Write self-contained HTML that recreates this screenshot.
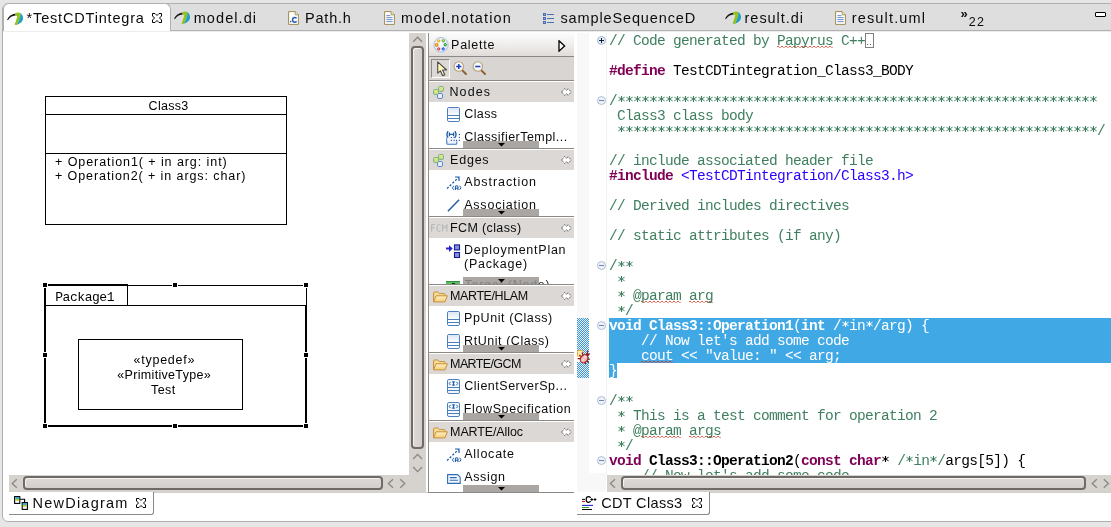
<!DOCTYPE html>
<html>
<head>
<meta charset="utf-8">
<title>Papyrus</title>
<style>
html,body{margin:0;padding:0;}
body{width:1111px;height:527px;overflow:hidden;background:#e6e6e6;position:relative;font-family:"Liberation Sans",sans-serif;color:#0c0c0c;}
.abs,.abs *{position:absolute;}
div,span,svg{position:absolute;box-sizing:border-box;}
.t{white-space:nowrap;line-height:1;}
.t14{font-size:14.5px;}
.t12{font-size:12.5px;}
/* frame */
#frame{left:2px;top:3px;width:1120px;height:519px;background:#fff;border:1px solid #b0b0b0;border-radius:6px 0 0 6px;}
#tabbar{left:3px;top:4px;width:1108px;height:26px;background:#dedede;}
#tabline{left:3px;top:30px;width:1108px;height:1px;background:#b2b2b2;}
#tabline2{left:3px;top:31px;width:1108px;height:1px;background:#ececec;}
#acttab{left:3px;top:3px;width:168px;height:29px;background:#fff;border:1px solid #b0b0b0;border-bottom:none;border-radius:6px 6px 0 0;}
/* scrollbars */
.trough{background:#d6d2ce;}
.thumb{background:linear-gradient(#dedad7,#d3cfcc);border:2px solid #6f6a67;border-radius:4px;box-shadow:inset 1px 1px 0 #f4f2f0;}
.thumbv{background:linear-gradient(90deg,#dedad7,#d3cfcc);border:2px solid #6f6a67;border-radius:4px;box-shadow:inset 1px 1px 0 #f4f2f0;}
/* diagram */
.ln{background:#000;}
#d1,#d2,#d3,#d4,#d5,#d6,#d7{color:#000;}
.hd{background:#000;width:4px;height:4px;box-shadow:0 0 0 1px #fff;}
/* palette */
#pal{left:429px;top:33px;width:145px;height:460px;background:#fff;overflow:hidden;}
.dh{left:0;width:145px;height:20px;background:#dcd8d6;}
.dline{left:0;width:145px;height:1px;background:#8c8886;}
.sd{left:34px;width:76px;height:6px;background:#aaa6a4;}
.pin{left:130px;}
/* code */
#code{left:577px;top:33px;width:534px;height:442px;background:#fff;overflow:hidden;}
.cl{left:32px;height:15px;white-space:pre;font-family:"Liberation Mono",monospace;font-size:14.5px;letter-spacing:-0.7px;line-height:17px;color:#000;}
.sel,.sel span{color:#fff !important;}
.cm{color:#3f7f5f;position:static;}
.kw{color:#7f0055;font-weight:bold;position:static;}
.b{font-weight:bold;position:static;}
.st{color:#2a00ff;position:static;}
.sq{position:static;background:repeating-linear-gradient(90deg,rgba(228,48,20,.8) 0 2px,transparent 2px 4px) 0 13px/100% 1px no-repeat,repeating-linear-gradient(90deg,transparent 0 2px,rgba(228,48,20,.5) 2px 4px) 0 14px/100% 1px no-repeat;}
</style>
</head>
<body>
<div id="root" style="left:0;top:0;width:1111px;height:527px;will-change:transform;">
<!--SYM-->
<svg width="0" height="0" style="left:0;top:0;">
<defs>
<linearGradient id="g-cls" x1="0" y1="0" x2="0" y2="1"><stop offset="0" stop-color="#dbe6f5"/><stop offset="1" stop-color="#fbfcfe"/></linearGradient>
<linearGradient id="g-yg" x1="0" y1="0" x2="0" y2="1"><stop offset="0" stop-color="#eeea78"/><stop offset="1" stop-color="#c4d690"/></linearGradient>
<linearGradient id="g-fold" x1="0" y1="0" x2="0" y2="1"><stop offset="0" stop-color="#fdf0c4"/><stop offset="1" stop-color="#f3cf7a"/></linearGradient>
<radialGradient id="g-pal" cx="0.5" cy="0.4" r="0.6"><stop offset="0" stop-color="#ffffff"/><stop offset="1" stop-color="#d5e3f5"/></radialGradient>
<symbol id="i-pal" viewBox="0 0 16 16">
<ellipse cx="8" cy="7.8" rx="7.2" ry="7.4" fill="url(#g-pal)" stroke="#a9bedc" stroke-width="0.9"/>
<circle cx="5.6" cy="3.9" r="1.2" fill="#ffe9a0" stroke="#eda800" stroke-width="1"/>
<circle cx="10.3" cy="3.8" r="1.2" fill="#d8f0a0" stroke="#58a818" stroke-width="1"/>
<circle cx="3.7" cy="7.9" r="1.3" fill="#ffd890" stroke="#f08a00" stroke-width="1.1"/>
<circle cx="12.2" cy="7.7" r="1.2" fill="#a0e0a0" stroke="#149414" stroke-width="1"/>
<circle cx="5.7" cy="11.9" r="1.1" fill="#ffc0c0" stroke="#d82828" stroke-width="1"/>
<circle cx="10.2" cy="11.9" r="1.1" fill="#b0c8ff" stroke="#1848d8" stroke-width="1"/>
</symbol>
<symbol id="i-cursor" viewBox="0 0 11 16">
<path d="M0.7 0.8 L0.7 12.2 L3.4 9.8 L5.6 14.8 L7.8 13.8 L5.6 9 L9.6 9 Z" fill="#fbf7b8" stroke="#4a4a4a" stroke-width="1.1" stroke-linejoin="round"/>
</symbol>
<symbol id="i-zoomin" viewBox="0 0 14 14">
<path d="M8.8 8.8 L13 13" stroke="#8a5a2a" stroke-width="1.8" stroke-linecap="round"/>
<circle cx="5.8" cy="5.5" r="4.7" fill="#f4f8fd" stroke="#b8a070" stroke-width="1.1"/>
<path d="M3.2 5.5H8.4M5.8 2.9V8.1" stroke="#1a3fc0" stroke-width="1.5"/>
</symbol>
<symbol id="i-zoomout" viewBox="0 0 14 14">
<path d="M8.8 8.8 L13 13" stroke="#8a5a2a" stroke-width="1.8" stroke-linecap="round"/>
<circle cx="5.8" cy="5.5" r="4.7" fill="#f4f8fd" stroke="#b8a070" stroke-width="1.1"/>
<path d="M3.2 5.5H8.4" stroke="#1a3fc0" stroke-width="1.5"/>
</symbol>
<symbol id="i-nodes" viewBox="0 0 11 13">
<rect x="5.5" y="0.5" width="5" height="5" rx="1.3" fill="url(#g-yg)" stroke="#74b68c" stroke-width="1"/>
<rect x="4.5" y="7.5" width="5" height="5" rx="1.3" fill="#e8f1f8" stroke="#5b82c8" stroke-width="1"/>
<rect x="0.5" y="3.5" width="5" height="5" rx="1.3" fill="url(#g-yg)" stroke="#74b68c" stroke-width="1"/>
</symbol>
<symbol id="i-folder" viewBox="0 0 17 13">
<path d="M1 11.5 V2.2 Q1 1 2.2 1 H5.6 L7.2 2.8 H12.4 Q13.4 2.8 13.4 3.8 V5" fill="#f7dc98" stroke="#c48a2c" stroke-width="1"/>
<path d="M1 11.8 L3.6 5.2 H16 L13.2 11.8 Z" fill="url(#g-fold)" stroke="#c48a2c" stroke-width="1" stroke-linejoin="round"/>
</symbol>
<symbol id="i-pin" viewBox="0 0 11 8">
<path d="M0.6 4 L3.6 0.6 L5.4 2.6 L7.2 0.6 L10.2 4 L7.2 7.4 L5.4 5.4 L3.6 7.4 Z" fill="#fff" stroke="#3c3836" stroke-width="1" stroke-dasharray="1 1"/>
</symbol>
<symbol id="i-class" viewBox="0 0 13 15">
<rect x="0.5" y="0.5" width="12" height="14" rx="1.4" fill="#fff" stroke="#4a80bf" stroke-width="1"/>
<rect x="1" y="1" width="11" height="7" fill="url(#g-cls)"/>
<path d="M0.5 8.5H12.5M0.5 11.5H12.5" stroke="#4a80bf" stroke-width="1"/>
</symbol>
<symbol id="i-iface" viewBox="0 0 13 15">
<rect x="0.5" y="0.5" width="12" height="14" rx="1.4" fill="#f4f8fd" stroke="#4a80bf" stroke-width="1"/>
<path d="M0.5 8.5H12.5M0.5 11.5H12.5" stroke="#4a80bf" stroke-width="1"/>
<path d="M3.6 2.8 L2.2 4.5 L3.6 6.2 M9.4 2.8 L10.8 4.5 L9.4 6.2" fill="none" stroke="#1f5ea8" stroke-width="1"/>
<path d="M5.2 2.9H7.8M5.2 6.1H7.8M6.5 2.9V6.1" stroke="#1f5ea8" stroke-width="1.2"/>
</symbol>
<symbol id="i-ctempl" viewBox="0 0 15 14">
<path d="M0.8 6.6 V12.4 Q0.8 13.3 1.7 13.3 H9.9 Q10.8 13.3 10.8 12.4 V10.4" fill="#eef4fb" stroke="#3d7abf" stroke-width="1.1"/>
<rect x="1.4" y="6.4" width="8.8" height="3.4" fill="#f4f8fd"/>
<path d="M2 0.2 Q0 3.4 2 6.6 M9 0.2 Q11 3.4 9 6.6" fill="none" stroke="#1c5fa8" stroke-width="1.4"/>
<path d="M3.4 1.6V5.2M7.6 1.6V5.2M3.4 3.4H7.6" stroke="#1c5fa8" stroke-width="1.3"/>
<g fill="#1f3a96"><rect x="12.8" y="3" width="1.1" height="1.1"/><rect x="12.8" y="5.9" width="1.1" height="1.1"/><rect x="12.8" y="8.8" width="1.1" height="1.1"/><rect x="10" y="8.8" width="1.1" height="1.1"/><rect x="7.6" y="8.8" width="1.1" height="1.1"/><rect x="4.8" y="8.8" width="1.1" height="1.1"/><rect x="4.8" y="6" width="1.1" height="1"/><rect x="7.6" y="6" width="1.1" height="1"/></g>
</symbol>
<symbol id="i-abst" viewBox="0 0 16 15">
<path d="M1 12.6 L12.6 1.4" stroke="#1f5ea8" stroke-width="1.3" stroke-dasharray="2.2 1.6"/>
<path d="M9 1 H13 V5" fill="none" stroke="#1f5ea8" stroke-width="1.2"/>
<path d="M7.8 9.8 L6.4 11.8 L7.8 13.8 M13.6 9.8 L15 11.8 L13.6 13.8" fill="none" stroke="#1f5ea8" stroke-width="1"/>
<path d="M9.4 14 V11 Q9.4 9.8 10.7 9.8 Q12 9.8 12 11 V14 M9.4 12.2 H12" fill="none" stroke="#1f5ea8" stroke-width="1.1"/>
</symbol>
<symbol id="i-deploy" viewBox="0 0 16 15">
<path d="M0 3.6 H3 V1.2 L6.8 4.6 L3 8 V5.6 H0 Z" fill="#2424d0"/>
<rect x="8.5" y="0.9" width="5" height="5" fill="#7f8fe0" stroke="#1a1a90" stroke-width="1.1"/>
<rect x="8.5" y="8.5" width="5" height="5" fill="#7f8fe0" stroke="#1a1a90" stroke-width="1.1"/>
</symbol>
<symbol id="i-note" viewBox="0 0 14 10">
<path d="M0.6 0.6 H10.6 L13.2 3.2 V9.4 H0.6 Z" fill="#f2f7fd" stroke="#2f6cb8" stroke-width="1.1" stroke-linejoin="round"/>
<path d="M2.8 3.6 H9.6 M2.8 6.2 H11" stroke="#2f6cb8" stroke-width="1.1"/>
</symbol>
<symbol id="i-papy" viewBox="0 0 17 14">
<path d="M0.1 7.7 Q2.4 2.2 8.6 1.5 L8.6 3.6 Q3.8 3.9 0.9 8.2 Z" fill="#17171c"/>
<path d="M8.2 1.4 Q10 0 13.4 0.9 Q13.6 4.6 12 8 Q11 10.6 10.2 12.7 Q8.6 13.4 7.6 12.6 Q9.4 8 10.3 4.2 Q9 3.6 8.2 3.4 Z" fill="#94c11c"/>
<path d="M13.4 0.9 Q16.4 3.4 16 7 Q15.4 10.6 10.2 12.7 Q11 10.6 12 8 Q13.6 4.6 13.4 0.9 Z" fill="#1f9fc4"/>
</symbol>
<symbol id="i-close" viewBox="0 0 10 10">
<path d="M0.5 0.5 H3 L5 2.5 L7 0.5 H9.5 V3 L7.5 5 L9.5 7 V9.5 H7 L5 7.5 L3 9.5 H0.5 V7 L2.5 5 L0.5 3 Z" fill="#fff" stroke="#000" stroke-width="1" stroke-linejoin="miter"/>
</symbol>
<symbol id="i-doc" viewBox="0 0 11 14">
<path d="M0.6 0.6 H7.2 L10.4 3.8 V13.4 H0.6 Z" fill="#fdfdfd" stroke="#a08a50" stroke-width="1"/>
<path d="M7.2 0.6 V3.8 H10.4" fill="#f4ecd0" stroke="#a08a50" stroke-width="0.9"/>
<path d="M2.4 4.6H6.4M2.4 6.6H8.6M2.4 8.6H8.6M2.4 10.6H8.6" stroke="#5a82c8" stroke-width="0.9"/>
</symbol>
<symbol id="i-cfile" viewBox="0 0 11 14">
<path d="M0.6 0.6 H7.2 L10.4 3.8 V13.4 H0.6 Z" fill="#fdfdfd" stroke="#a08a50" stroke-width="1"/>
<path d="M7.2 0.6 V3.8 H10.4" fill="#f4ecd0" stroke="#a08a50" stroke-width="0.9"/>
<rect x="2" y="9.8" width="1.4" height="1.5" fill="#2a5fb0"/>
<path d="M8.6 7.4 Q7.8 6.4 6.6 6.4 Q4.6 6.4 4.6 8.8 Q4.6 11.2 6.6 11.2 Q7.8 11.2 8.6 10.2" fill="none" stroke="#2a5fb0" stroke-width="1.5"/>
</symbol>
<symbol id="i-list" viewBox="0 0 12 12">
<g fill="#4a6fb2"><rect x="0" y="0" width="3" height="3"/><rect x="0" y="4" width="3" height="3"/><rect x="0" y="8" width="3" height="3"/>
<rect x="4" y="1" width="7" height="1"/><rect x="4" y="5" width="7" height="1"/><rect x="4" y="9" width="7" height="1"/></g>
<g fill="#9db3de"><rect x="1" y="1" width="1" height="1"/><rect x="1" y="5" width="1" height="1"/><rect x="1" y="9" width="1" height="1"/></g>
</symbol>
<symbol id="i-diag" viewBox="0 0 15 14">
<rect x="0.6" y="0.6" width="5.2" height="6.8" fill="#fff" stroke="#000" stroke-width="1.1"/>
<rect x="1.2" y="1.2" width="4" height="1.6" fill="#1a9ac8"/>
<rect x="1.2" y="3" width="4" height="1.6" fill="#a8c81a"/>
<path d="M5.8 3.2 H10.6 V6.4" fill="none" stroke="#000" stroke-width="1.1"/>
<rect x="8.2" y="6.6" width="5.2" height="6.8" fill="#fff" stroke="#000" stroke-width="1.1"/>
<rect x="8.8" y="7.2" width="4" height="1.6" fill="#1a9ac8"/>
<rect x="8.8" y="9" width="4" height="1.6" fill="#a8c81a"/>
</symbol>
<symbol id="i-cdt" viewBox="0 0 15 14">
<path d="M0 3.4H3M0 13.5H10" stroke="#000" stroke-width="1"/>
<path d="M0 5.5H3" stroke="#e01010" stroke-width="1.1"/>
<path d="M0 9.4H11" stroke="#2222e0" stroke-width="1.1"/>
<path d="M0 11.5H7" stroke="#30a030" stroke-width="1.1"/>
<path d="M8.6 1.9 Q7.8 0.7 6.5 0.7 Q4.2 0.7 4.2 3.5 Q4.2 6.3 6.5 6.3 Q7.8 6.3 8.6 5.1" fill="none" stroke="#000" stroke-width="1.2"/>
<path d="M8.4 3.5H11.2M9.8 2.1V4.9M11.6 3.5H14.4M13 2.1V4.9" stroke="#000" stroke-width="1"/>
</symbol>
<symbol id="i-fplus" viewBox="0 0 9 9">
<circle cx="4.5" cy="4.5" r="4" fill="#e6ecf4" stroke="#a3b6d2" stroke-width="1"/>
<path d="M2 4.5H7M4.5 2V7" stroke="#0c1c3a" stroke-width="1"/>
</symbol>
<symbol id="i-fminus" viewBox="0 0 9 9">
<circle cx="4.5" cy="4.5" r="4" fill="#eef2f8" stroke="#aebfd8" stroke-width="1"/>
<path d="M2 4.5H7" stroke="#6f88b4" stroke-width="1"/>
</symbol>
<symbol id="i-fcm" viewBox="0 0 17 8">
<path d="M0.6 7.6V0.6H4M0.6 3.8H3.2" fill="none" stroke="#b4b4b4" stroke-width="1"/>
<path d="M9.6 1.4Q8.8 0.5 7.8 0.5Q6 0.5 6 4Q6 7.5 7.8 7.5Q8.8 7.5 9.6 6.6" fill="none" stroke="#b4b4b4" stroke-width="1"/>
<path d="M11.6 7.6V0.6L13.8 4.4L16 0.6V7.6" fill="none" stroke="#b4b4b4" stroke-width="1"/>
</symbol>
<symbol id="i-bug" viewBox="0 0 13 15">
<rect x="0" y="6.4" width="4.4" height="6.6" fill="#fff"/>
<rect x="0.5" y="1.5" width="5.2" height="6" rx="0.8" fill="#fcecb0" stroke="#f0a630" stroke-width="1"/>
<g transform="rotate(38 7.4 9.4)">
<path d="M4.3 7.6 L1.8 6.2 M4 9.8 L1.2 9.8 M4.4 12 L2.2 13.8 M10.5 7.6 L13 6.2 M10.8 9.8 L13.6 9.8 M10.4 12 L12.6 13.8 M6.6 4 L5.4 1 M8.2 4 L9.4 1" stroke="#8e1616" stroke-width="1.1" fill="none"/>
<circle cx="7.4" cy="5" r="1.7" fill="#8e1616"/>
<ellipse cx="7.4" cy="9.9" rx="3.5" ry="4.3" fill="#ecb8b8" stroke="#a01c1c" stroke-width="1.1"/>
<path d="M7.4 6 V13.8" stroke="#fff" stroke-width="0.9" stroke-dasharray="1.2 0.8"/>
<path d="M5.6 8 Q6 7 7 6.8" stroke="#fff" stroke-width="0.9" fill="none" opacity=".9"/>
</g>
</symbol>
<pattern id="star-g" width="8" height="15" patternUnits="userSpaceOnUse"><path d="M4.5 3V9" stroke="#3f7f5f" stroke-width="1.15"/><path d="M1.4 4.2L7.6 7.8M7.6 4.2L1.4 7.8" stroke="#3f7f5f" stroke-width="0.95"/></pattern>
<pattern id="star-w" width="8" height="15" patternUnits="userSpaceOnUse"><path d="M4.5 3V9" stroke="#ffffff" stroke-width="1.15"/><path d="M1.4 4.2L7.6 7.8M7.6 4.2L1.4 7.8" stroke="#ffffff" stroke-width="0.95"/></pattern>
<pattern id="star-k" width="8" height="15" patternUnits="userSpaceOnUse"><path d="M4.5 3V9" stroke="#000000" stroke-width="1.15"/><path d="M1.4 4.2L7.6 7.8M7.6 4.2L1.4 7.8" stroke="#000000" stroke-width="0.95"/></pattern>
<pattern id="hatch" width="2" height="2" patternUnits="userSpaceOnUse"><rect width="2" height="2" fill="#f3ebe6"/><rect width="1" height="1" fill="#339ae6"/><rect x="1" y="1" width="1" height="1" fill="#339ae6"/></pattern>
</defs>
</svg>
<!--/SYM-->
<div id="frame"></div>
<div id="tabbar"></div>
<div id="tabline"></div>
<div id="acttab"></div>
<div id="tabline2"></div>

<!-- TABS -->
<div id="tabs" style="left:0;top:0;width:1111px;height:32px;">

<svg style="left:7px;top:11.5px;" width="17" height="14" viewBox="0 0 17 14"><use href="#i-papy"/></svg>
<svg style="left:152px;top:13px;" width="10" height="10" viewBox="0 0 10 10"><use href="#i-close"/></svg>
<svg style="left:174px;top:11.2px;" width="17" height="14" viewBox="0 0 17 14"><use href="#i-papy"/></svg>
<svg style="left:288px;top:11px;" width="11" height="14" viewBox="0 0 11 14"><use href="#i-cfile"/></svg>
<svg style="left:384px;top:11px;" width="11" height="14" viewBox="0 0 11 14"><use href="#i-doc"/></svg>
<svg style="left:543px;top:13px;" width="12" height="12" viewBox="0 0 12 12"><use href="#i-list"/></svg>
<svg style="left:725px;top:11.2px;" width="17" height="14" viewBox="0 0 17 14"><use href="#i-papy"/></svg>
<svg style="left:835px;top:11px;" width="11" height="14" viewBox="0 0 11 14"><use href="#i-doc"/></svg>
<span class="t t14" id="tb1" style="left:26.6px;letter-spacing:0.82px;top:11px;">*TestCDTintegra</span>
<span class="t t14" id="tb2" style="left:193.7px;letter-spacing:1.08px;top:11px;">model.di</span>
<span class="t t14" id="tb3" style="left:305.1px;letter-spacing:0.77px;top:11px;">Path.h</span>
<span class="t t14" id="tb4" style="left:401px;letter-spacing:1.13px;top:11px;">model.notation</span>
<span class="t t14" id="tb5" style="left:560.5px;letter-spacing:0.87px;top:11px;">sampleSequenceD</span>
<span class="t t14" id="tb6" style="left:744.6px;letter-spacing:0.95px;top:11px;">result.di</span>
<span class="t t14" id="tb7" style="left:851.7px;letter-spacing:1.17px;top:11px;">result.uml</span>
<span class="t" id="tb8" style="left:960.5px;top:7px;font-size:13px;font-weight:bold;">»</span>
<span class="t t12" id="tb9" style="left:968.8px;letter-spacing:1.15px;top:16px;font-size:12.5px;">22</span>
<div style="left:1095px;top:12px;width:11px;height:5px;border:1px solid #000;background:#fff;border-radius:1px;"></div>
</div>

<!-- LEFT DIAGRAM -->
<div id="diag" style="left:3px;top:32px;width:407px;height:443px;background:#fff;overflow:hidden;"></div>
<!-- Class3 -->
<div style="left:45px;top:96px;width:242px;height:129px;border:1px solid #000;"></div>
<div class="ln" style="left:45px;top:114px;width:242px;height:1px;"></div>
<div class="ln" style="left:45px;top:153px;width:242px;height:1px;"></div>
<span class="t t12" id="d1" style="left:148.6px;letter-spacing:0.29px;top:100px;">Class3</span>
<span class="t t12" id="d2" style="left:55.0px;letter-spacing:0.93px;top:156px;">+ Operation1( + in arg: int)</span>
<span class="t t12" id="d3" style="left:55.0px;letter-spacing:0.91px;top:170px;">+ Operation2( + in args: char)</span>
<!-- Package1 -->
<div class="ln" style="left:45px;top:284px;width:83px;height:2px;"></div>
<div class="ln" style="left:127px;top:285px;width:180px;height:1px;"></div>
<div class="ln" style="left:44px;top:285px;width:2px;height:142px;"></div>
<div class="ln" style="left:127px;top:285px;width:1px;height:21px;"></div>
<div class="ln" style="left:45px;top:305px;width:262px;height:1px;"></div>
<div class="ln" style="left:306px;top:285px;width:1px;height:21px;"></div>
<div class="ln" style="left:305px;top:305px;width:2px;height:122px;"></div>
<div class="ln" style="left:45px;top:425px;width:262px;height:2px;"></div>
<div class="hd" style="left:43px;top:283px;"></div>
<div class="hd" style="left:173px;top:283px;"></div>
<div class="hd" style="left:304px;top:283px;"></div>
<div class="hd" style="left:43px;top:353px;"></div>
<div class="hd" style="left:304px;top:353px;"></div>
<div class="hd" style="left:43px;top:424px;"></div>
<div class="hd" style="left:173px;top:424px;"></div>
<div class="hd" style="left:304px;top:424px;"></div>
<span class="t" id="d4" style="left:55.2px;letter-spacing:-0.44px;top:291px;font-family:'Liberation Mono',monospace;font-size:13px;">Package1</span>
<div style="left:78px;top:339px;width:165px;height:71px;border:1px solid #000;"></div>
<span class="t t12" id="d5" style="left:133.6px;letter-spacing:0.74px;top:354px;">«typedef»</span>
<span class="t t12" id="d6" style="left:117.3px;letter-spacing:0.32px;top:369px;">«PrimitiveType»</span>
<span class="t t12" id="d7" style="left:150.9px;letter-spacing:0.51px;top:384px;">Test</span>

<!-- left scrollbars -->
<div class="trough" style="left:9px;top:475px;width:417px;height:17px;"></div>
<div class="thumb" style="left:23px;top:476px;width:360px;height:14px;"></div>
<div class="trough" style="left:409px;top:33px;width:17px;height:443px;"></div>
<div class="thumbv" style="left:411px;top:46px;width:13px;height:403px;"></div>
<div style="left:428px;top:33px;width:1px;height:460px;background:#908c8a;"></div>


<!-- PALETTE -->
<div id="pal">
<!--PAL-->
<div style="left:0;top:0;width:145px;height:23px;background:linear-gradient(#fcfcfc,#f3f1f0 40%,#e0dcda);"></div>
<div class="dline" style="top:23px;"></div>
<div style="left:0;top:24px;width:145px;height:23px;background:#d9d5d3;"></div>
<div class="dline" style="top:47px;"></div>
<svg style="left:4px;top:3.5px;" width="16" height="16" viewBox="0 0 16 16"><use href="#i-pal"/></svg>
<span class="t t12" id="p0" style="left:22.1px;letter-spacing:0.72px;top:6px;">Palette</span>
<svg style="left:129.3px;top:6.5px;" width="8" height="12" viewBox="0 0 8 12"><path d="M1 0.8 L6.6 6 L1 11.2 Z" fill="#fff" stroke="#000" stroke-width="1.3"/></svg>
<div style="left:2px;top:26px;width:19px;height:19px;border:1px solid;border-color:#8e8a88 #fff #fff #8e8a88;background:#dcd8d6;"></div>
<svg style="left:7.6px;top:28.2px;" width="11" height="16" viewBox="0 0 11 16"><use href="#i-cursor"/></svg>
<svg style="left:24px;top:28px;" width="14" height="14" viewBox="0 0 14 14"><use href="#i-zoomin"/></svg>
<svg style="left:42.8px;top:28px;" width="14" height="14" viewBox="0 0 14 14"><use href="#i-zoomout"/></svg>
<div class="dh" style="top:49px;"></div>
<svg style="left:4px;top:53px;" width="11" height="13" viewBox="0 0 11 13"><use href="#i-nodes"/></svg>
<span class="t t12" id="p1" style="left:20.5px;letter-spacing:1.09px;top:53px;">Nodes</span>
<svg style="left:131.6px;top:55.4px;" width="11" height="8" viewBox="0 0 11 8"><use href="#i-pin"/></svg>
<span class="t t12" id="p2" style="left:35.3px;letter-spacing:0.36px;top:74.6px;">Class</span>
<svg style="left:18px;top:74px;" width="13" height="15" viewBox="0 0 13 15"><use href="#i-class"/></svg>
<span class="t t12" id="p3" style="left:35.3px;letter-spacing:0.45px;top:97.6px;">ClassifierTempl...</span>
<svg style="left:17px;top:98px;" width="15" height="14" viewBox="0 0 15 14"><use href="#i-ctempl"/></svg>
<div class="sd" style="top:108px;height:7px;"></div>
<svg style="left:68.6px;top:110.4px;" width="7" height="3.6" viewBox="0 0 7 3.6"><path d="M0 0H7L3.5 3.6Z" fill="#000"/></svg>
<div class="dline" style="top:115px;"></div>
<div class="dh" style="top:117px;"></div>
<svg style="left:4px;top:121px;" width="11" height="13" viewBox="0 0 11 13"><use href="#i-nodes"/></svg>
<span class="t t12" id="p4" style="left:21.1px;letter-spacing:0.77px;top:121px;">Edges</span>
<svg style="left:131.6px;top:123.4px;" width="11" height="8" viewBox="0 0 11 8"><use href="#i-pin"/></svg>
<span class="t t12" id="p5" style="left:35.2px;letter-spacing:0.93px;top:142.6px;">Abstraction</span>
<svg style="left:17px;top:142.6px;" width="16" height="15" viewBox="0 0 16 15"><use href="#i-abst"/></svg>
<span class="t t12" id="p6" style="left:35.2px;letter-spacing:0.79px;top:165.6px;">Association</span>
<svg style="left:18px;top:166px;" width="13" height="13" viewBox="0 0 13 13"><path d="M0.9 12.2 L12.1 0.8" stroke="#1a5a9e" stroke-width="1.4"/></svg>
<div class="sd" style="top:176px;height:7px;"></div>
<svg style="left:68.6px;top:178.4px;" width="7" height="3.6" viewBox="0 0 7 3.6"><path d="M0 0H7L3.5 3.6Z" fill="#000"/></svg>
<div class="dline" style="top:183px;"></div>
<div class="dh" style="top:185px;"></div>
<svg style="left:2px;top:191px;" width="17" height="8" viewBox="0 0 17 8"><use href="#i-fcm"/></svg>
<span class="t t12" id="p7" style="left:21.1px;letter-spacing:0.36px;top:189px;">FCM (class)</span>
<svg style="left:131.6px;top:191.4px;" width="11" height="8" viewBox="0 0 11 8"><use href="#i-pin"/></svg>
<span class="t t12" id="p8" style="left:35.1px;letter-spacing:0.75px;top:210.6px;">DeploymentPlan</span>
<svg style="left:16.6px;top:211px;" width="16" height="15" viewBox="0 0 16 15"><use href="#i-deploy"/></svg>
<span class="t t12" id="p9" style="left:35.0px;letter-spacing:0.77px;top:224.6px;">(Package)</span>
<span class="t t12" id="p10" style="left:35.6px;letter-spacing:0.72px;top:245.6px;height:5.4px;overflow:hidden;color:#333;">Target (Node)</span>
<div style="left:17px;top:248px;width:14px;height:3px;background:#58c060;border-top:1px solid #2f8f3a;"></div>
<div style="left:23px;top:249.6px;width:3px;height:2px;background:#222;"></div>
<div class="sd" style="top:244px;height:7px;background:rgba(150,146,144,.82);"></div>
<svg style="left:68.6px;top:246.4px;" width="7" height="3.6" viewBox="0 0 7 3.6"><path d="M0 0H7L3.5 3.6Z" fill="#000"/></svg>
<div class="dline" style="top:251px;"></div>
<div class="dh" style="top:253px;"></div>
<svg style="left:2.6px;top:257.6px;" width="17" height="12" viewBox="0 0 17 12"><use href="#i-folder"/></svg>
<span class="t t12" id="p11" style="left:21.1px;letter-spacing:-0.42px;top:257px;">MARTE/HLAM</span>
<svg style="left:131.6px;top:259.4px;" width="11" height="8" viewBox="0 0 11 8"><use href="#i-pin"/></svg>
<span class="t t12" id="p12" style="left:35.1px;letter-spacing:0.58px;top:278.6px;">PpUnit (Class)</span>
<svg style="left:18px;top:278px;" width="13" height="15" viewBox="0 0 13 15"><use href="#i-class"/></svg>
<span class="t t12" id="p13" style="left:35.1px;letter-spacing:0.55px;top:301.6px;">RtUnit (Class)</span>
<svg style="left:18px;top:301px;" width="13" height="15" viewBox="0 0 13 15"><use href="#i-class"/></svg>
<div class="sd" style="top:312px;height:7px;"></div>
<svg style="left:68.6px;top:314.4px;" width="7" height="3.6" viewBox="0 0 7 3.6"><path d="M0 0H7L3.5 3.6Z" fill="#000"/></svg>
<div class="dline" style="top:319px;"></div>
<div class="dh" style="top:321px;"></div>
<svg style="left:2.6px;top:325.6px;" width="17" height="12" viewBox="0 0 17 12"><use href="#i-folder"/></svg>
<span class="t t12" id="p14" style="left:21.1px;letter-spacing:-0.62px;top:325px;">MARTE/GCM</span>
<svg style="left:131.6px;top:327.4px;" width="11" height="8" viewBox="0 0 11 8"><use href="#i-pin"/></svg>
<span class="t t12" id="p15" style="left:35.3px;letter-spacing:0.51px;top:346.6px;">ClientServerSp...</span>
<svg style="left:18px;top:346px;" width="13" height="15" viewBox="0 0 13 15"><use href="#i-iface"/></svg>
<span class="t t12" id="p16" style="left:34.8px;letter-spacing:0.61px;top:369.6px;">FlowSpecification</span>
<svg style="left:18px;top:369px;" width="13" height="15" viewBox="0 0 13 15"><use href="#i-iface"/></svg>
<div class="sd" style="top:380px;height:7px;"></div>
<svg style="left:68.6px;top:382.4px;" width="7" height="3.6" viewBox="0 0 7 3.6"><path d="M0 0H7L3.5 3.6Z" fill="#000"/></svg>
<div class="dline" style="top:387px;"></div>
<div class="dh" style="top:389px;"></div>
<svg style="left:2.6px;top:393.6px;" width="17" height="12" viewBox="0 0 17 12"><use href="#i-folder"/></svg>
<span class="t t12" id="p17" style="left:21.1px;letter-spacing:-0.12px;top:393px;">MARTE/Alloc</span>
<svg style="left:131.6px;top:395.4px;" width="11" height="8" viewBox="0 0 11 8"><use href="#i-pin"/></svg>
<span class="t t12" id="p18" style="left:35.2px;letter-spacing:0.77px;top:414.6px;">Allocate</span>
<svg style="left:17px;top:414.6px;" width="16" height="15" viewBox="0 0 16 15"><use href="#i-abst"/></svg>
<span class="t t12" id="p19" style="left:35.2px;letter-spacing:0.67px;top:437.6px;">Assign</span>
<svg style="left:18px;top:440.6px;" width="14" height="10" viewBox="0 0 14 10"><use href="#i-note"/></svg>
<div class="sd" style="top:452px;height:6.6px;"></div>
<svg style="left:68.6px;top:454.4px;" width="7" height="3.6" viewBox="0 0 7 3.6"><path d="M0 0H7L3.5 3.6Z" fill="#000"/></svg>
<div class="dline" style="top:459px;"></div>
<!--/PAL-->
</div>

<!-- CODE -->
<div id="code">
<!--CODE-->
<div style="left:0;top:0;width:29px;height:442px;background:#f8f8f8;"></div>
<div style="left:12px;top:0;width:17px;height:440px;background:#fff;"></div>
<div style="left:29px;top:0;width:1px;height:442px;background:#f1f1f1;"></div>
<div style="left:30px;top:0;width:1px;height:442px;background:#fff;"></div>
<svg style="left:0;top:285px;" width="12" height="60"><rect width="12" height="60" fill="url(#hatch)"/></svg>
<div style="left:32px;top:285px;width:502px;height:45px;background:#41a8e6;"></div>
<div style="left:32px;top:330px;width:8px;height:15px;background:#41a8e6;"></div>
<div class="cl" style="top:0px;"><span class="cm">// Code generated by </span><span class="cm"><span class="sq">Papyrus</span></span><span class="cm"> C++</span></div>
<div class="cl" style="top:30px;"><span class="kw">#define</span> TestCDTintegration_Class3_BODY</div>
<div class="cl" style="top:60px;"><span class="cm">/                                                            </span></div>
<div class="cl" style="top:75px;"><span class="cm"> Class3 class body</span></div>
<div class="cl" style="top:90px;"><span class="cm">                                                             /</span></div>
<div class="cl" style="top:120px;"><span class="cm">// include associated header file</span></div>
<div class="cl" style="top:135px;"><span class="kw">#include</span> <span class="st">&lt;TestCDTintegration/Class3.h&gt;</span></div>
<div class="cl" style="top:165px;"><span class="cm">// Derived includes directives</span></div>
<div class="cl" style="top:195px;"><span class="cm">// static attributes (if any)</span></div>
<div class="cl" style="top:225px;"><span class="cm">/  </span></div>
<div class="cl" style="top:240px;"><span class="cm">  </span></div>
<div class="cl" style="top:255px;"><span class="cm">   @</span><span class="cm"><span class="sq">param</span></span><span class="cm"> </span><span class="cm"><span class="sq">arg</span></span></div>
<div class="cl" style="top:270px;"><span class="cm">  /</span></div>
<div class="cl sel" style="top:285px;"><span class="b">void</span> <span class="b">Class3::Operation1</span>(<span class="b">int</span> / in /arg) {</div>
<div class="cl sel" style="top:300px;">    // Now let&#x27;s add some code</div>
<div class="cl sel" style="top:315px;">    <span class="sq">cout</span> &lt;&lt; &quot;value: &quot; &lt;&lt; arg;</div>
<div class="cl sel" style="top:330px;">}</div>
<div class="cl" style="top:360px;"><span class="cm">/  </span></div>
<div class="cl" style="top:375px;"><span class="cm">   This is a test comment for operation 2</span></div>
<div class="cl" style="top:390px;"><span class="cm">   @</span><span class="cm"><span class="sq">param</span></span><span class="cm"> </span><span class="cm"><span class="sq">args</span></span></div>
<div class="cl" style="top:405px;"><span class="cm">  /</span></div>
<div class="cl" style="top:420px;"><span class="kw">void</span> <span class="b">Class3::Operation2</span>(<span class="kw">const</span> <span class="kw">char</span>  <span class="cm">/ in /</span>args[5]) {</div>
<div class="cl" style="top:435px;"><span class="cm">    // Now let&#x27;s add some code</span></div>
<svg style="left:40px;top:60px;" width="480" height="15"><rect width="480" height="15" fill="url(#star-g)"/></svg>
<svg style="left:40px;top:90px;" width="480" height="15"><rect width="480" height="15" fill="url(#star-g)"/></svg>
<svg style="left:40px;top:225px;" width="16" height="15"><rect width="16" height="15" fill="url(#star-g)"/></svg>
<svg style="left:40px;top:240px;" width="8" height="15"><rect width="8" height="15" fill="url(#star-g)"/></svg>
<svg style="left:40px;top:255px;" width="8" height="15"><rect width="8" height="15" fill="url(#star-g)"/></svg>
<svg style="left:40px;top:270px;" width="8" height="15"><rect width="8" height="15" fill="url(#star-g)"/></svg>
<svg style="left:264px;top:285px;" width="8" height="15"><rect width="8" height="15" fill="url(#star-w)"/></svg>
<svg style="left:288px;top:285px;" width="8" height="15"><rect width="8" height="15" fill="url(#star-w)"/></svg>
<svg style="left:40px;top:360px;" width="16" height="15"><rect width="16" height="15" fill="url(#star-g)"/></svg>
<svg style="left:40px;top:375px;" width="8" height="15"><rect width="8" height="15" fill="url(#star-g)"/></svg>
<svg style="left:40px;top:390px;" width="8" height="15"><rect width="8" height="15" fill="url(#star-g)"/></svg>
<svg style="left:40px;top:405px;" width="8" height="15"><rect width="8" height="15" fill="url(#star-g)"/></svg>
<svg style="left:304px;top:420px;" width="8" height="15"><rect width="8" height="15" fill="url(#star-k)"/></svg>
<svg style="left:328px;top:420px;" width="8" height="15"><rect width="8" height="15" fill="url(#star-g)"/></svg>
<svg style="left:352px;top:420px;" width="8" height="15"><rect width="8" height="15" fill="url(#star-g)"/></svg>
<svg style="left:20px;top:3px;" width="9" height="9" viewBox="0 0 9 9"><use href="#i-fplus"/></svg>
<svg style="left:20px;top:63px;" width="9" height="9" viewBox="0 0 9 9"><use href="#i-fminus"/></svg>
<svg style="left:20px;top:228px;" width="9" height="9" viewBox="0 0 9 9"><use href="#i-fminus"/></svg>
<svg style="left:20px;top:288px;" width="9" height="9" viewBox="0 0 9 9"><use href="#i-fminus"/></svg>
<svg style="left:20px;top:363px;" width="9" height="9" viewBox="0 0 9 9"><use href="#i-fminus"/></svg>
<svg style="left:20px;top:423px;" width="9" height="9" viewBox="0 0 9 9"><use href="#i-fminus"/></svg>
<div style="left:288px;top:0px;width:9px;height:15px;border:1px solid #808080;"></div><div style="left:290px;top:11px;width:1px;height:1px;background:#555;"></div><div style="left:293px;top:11px;width:1px;height:1px;background:#555;"></div>
<svg style="left:0;top:316px;" width="13" height="15" viewBox="0 0 13 15"><use href="#i-bug"/></svg>
<!--/CODE-->
</div>
<!-- right scrollbar -->
<div class="trough" style="left:607px;top:475px;width:504px;height:17px;"></div>
<div class="thumb" style="left:621px;top:476px;width:465px;height:14px;"></div>
<div style="left:577px;top:475px;width:29px;height:17px;background:#f8f8f8;"></div>


<svg style="left:0;top:0;" width="1111" height="527" viewBox="0 0 1111 527" fill="none" stroke="#8b8784" stroke-width="1.3">
<path d="M16.8 479.2 L12.2 483.5 L16.8 487.8"/>
<path d="M393 479.2 L388.4 483.5 L393 487.8"/>
<path d="M400.2 479.2 L404.8 483.5 L400.2 487.8"/>
<path d="M413.2 41.8 L417.6 37.2 L422 41.8"/>
<path d="M413.2 459 L417.6 454.4 L422 459"/>
<path d="M413.2 467 L417.6 471.6 L422 467"/>
<path d="M615 479.2 L610.4 483.5 L615 487.8"/>
<path d="M1096.8 479.2 L1092.2 483.5 L1096.8 487.8"/>
<path d="M1103.8 479.2 L1108.4 483.5 L1103.8 487.8"/>
</svg>
<!-- BOTTOM TABS -->

<svg style="left:13.5px;top:496px;" width="15" height="14" viewBox="0 0 15 14"><use href="#i-diag"/></svg>
<svg style="left:136px;top:498px;" width="10" height="10" viewBox="0 0 10 10"><use href="#i-close"/></svg>
<svg style="left:582px;top:496px;" width="15" height="14" viewBox="0 0 15 14"><use href="#i-cdt"/></svg>
<svg style="left:692px;top:498px;" width="10" height="10" viewBox="0 0 10 10"><use href="#i-close"/></svg>
<div style="left:154px;top:492px;width:274px;height:1px;background:#d3cfcc;"></div>
<div style="left:710px;top:492px;width:401px;height:1px;background:#d3cfcc;"></div>
<div id="bt1" style="left:9px;top:492px;width:145px;height:23px;border:1px solid #8e8884;border-top:none;border-left:none;border-radius:0 0 3px 0;"></div>
<span class="t t14" id="b1" style="left:32.5px;letter-spacing:1.23px;top:496px;">NewDiagram</span>
<div id="bt2" style="left:577px;top:492px;width:133px;height:23px;border:1px solid #8e8884;border-top:none;border-left:none;border-radius:0 0 3px 0;"></div>
<span class="t t14" id="b2" style="left:601.2px;letter-spacing:0.34px;top:496px;">CDT Class3</span>

</div>
</body>
</html>
